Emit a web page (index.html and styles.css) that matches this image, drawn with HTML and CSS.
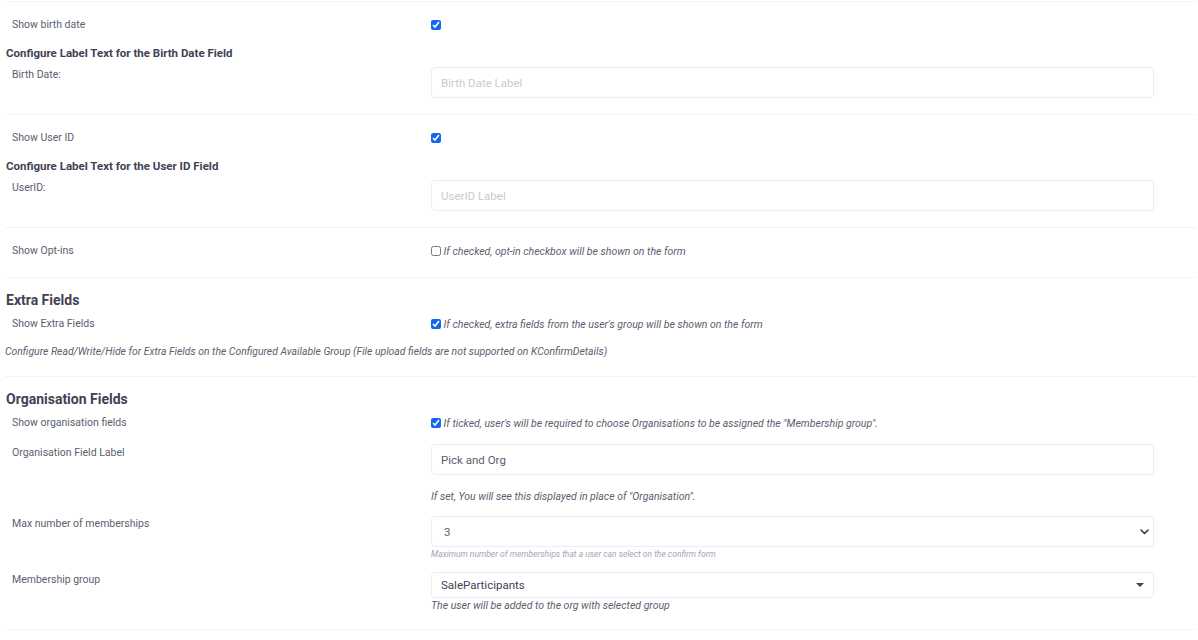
FILE: index.html
```html
<!DOCTYPE html>
<html lang="en">

<head>
    <meta charset="UTF-8">
    <meta name="viewport" content="width=device-width, initial-scale=1.0">
    <title>Confirm Details Settings</title>
    <link rel="stylesheet" href="styles.css">
</head>

<body>
    <div class="settings">
        <!-- Birth date -->
        <div class="group">
            <div class="row check-row">
                <div class="label">Show birth date</div>
                <div class="control"><input type="checkbox" checked></div>
            </div>
            <h4 class="sub-title">Configure Label Text for the Birth Date Field</h4>
            <div class="row input-row">
                <div class="label">Birth Date:</div>
                <div class="control"><input class="text-input" type="text" placeholder="Birth Date Label"></div>
            </div>
        </div>

        <!-- User ID -->
        <div class="group">
            <div class="row check-row">
                <div class="label">Show User ID</div>
                <div class="control"><input type="checkbox" checked></div>
            </div>
            <h4 class="sub-title">Configure Label Text for the User ID Field</h4>
            <div class="row input-row">
                <div class="label">UserID:</div>
                <div class="control"><input class="text-input" type="text" placeholder="UserID Label"></div>
            </div>
        </div>

        <!-- Opt-ins -->
        <div class="group">
            <div class="row check-row">
                <div class="label">Show Opt-ins</div>
                <div class="control">
                    <label class="check-label"><input type="checkbox"> If checked, opt-in checkbox will be shown on the form</label>
                </div>
            </div>
        </div>

        <!-- Extra fields -->
        <div class="group">
            <h3 class="section-title">Extra Fields</h3>
            <div class="row check-row">
                <div class="label">Show Extra Fields</div>
                <div class="control">
                    <label class="check-label"><input type="checkbox" checked> If checked, extra fields from the user's group will be shown on the form</label>
                </div>
            </div>
            <p class="note">Configure Read/Write/Hide for Extra Fields on the Configured Available Group (File upload fields are not supported on KConfirmDetails)</p>
        </div>

        <!-- Organisation fields -->
        <div class="group last">
            <h3 class="section-title">Organisation Fields</h3>
            <div class="row check-row">
                <div class="label">Show organisation fields</div>
                <div class="control">
                    <label class="check-label"><input type="checkbox" checked> If ticked, user's will be required to choose Organisations to be assigned the "Membership group".</label>
                </div>
            </div>
            <div class="row input-row org-label-row">
                <div class="label">Organisation Field Label</div>
                <div class="control">
                    <input class="text-input tall" type="text" value="Pick and Org">
                    <p class="hint">If set, You will see this displayed in place of "Organisation".</p>
                </div>
            </div>
            <div class="row input-row max-row">
                <div class="label">Max number of memberships</div>
                <div class="control">
                    <div class="fake-select">
                        <span>3</span>
                        <svg class="chevron" width="9" height="6" viewBox="0 0 9 6"><path d="M1 1l3.5 3.5L8 1" fill="none" stroke="#343a40" stroke-width="1.6" stroke-linecap="round" stroke-linejoin="round"/></svg>
                    </div>
                    <p class="small-hint">Maximum number of memberships that a user can select on the confirm form</p>
                </div>
            </div>
            <div class="row input-row group-row">
                <div class="label">Membership group</div>
                <div class="control">
                    <div class="fake-select short">
                        <span class="dark">SaleParticipants</span>
                        <svg class="caret" width="8" height="4" viewBox="0 0 8 4"><path d="M0 0h8L4 4z" fill="#444"/></svg>
                    </div>
                    <p class="hint tight">The user will be added to the org with selected group</p>
                </div>
            </div>
        </div>
    </div>
</body>

</html>
```

FILE: styles.css
```css
/* Settings form */
body {
    font-family: Roboto, "Noto Sans", Arial, sans-serif;
    margin: 0;
    padding: 0;
    background-color: #fff;
    color: #5b5e6e;
}

.settings {
    padding: 0 1px 0 5px;
}

.group {
    border-top: 1px solid #f3f3f6;
    padding: 13px 0 16px;
}

.group:first-child {
    margin-top: 1px;
}

.group.last {
    border-bottom: 1px solid #f3f3f6;
    padding-bottom: 16px;
}

.row {
    display: flex;
    align-items: flex-start;
}

.label {
    width: 419px;
    padding-top: 2px;
    padding-left: 7px;
    font-size: 10.5px;
    line-height: 16px;
    color: #5b5e6e;
    flex-shrink: 0;
}

.control {
    width: 723px;
}

.check-row {
    min-height: 20px;
}

.check-row .control {
    padding-top: 1px;
    line-height: 16px;
}

input[type="checkbox"] {
    width: 10px;
    height: 10px;
    margin: 0;
    vertical-align: -1px;
    accent-color: #1266f1;
}

.check-label {
    font-size: 10.5px;
    font-style: italic;
    color: #5b5e6e;
}

.sub-title {
    margin: 10px 0 0 1px;
    font-size: 11.5px;
    line-height: 16px;
    font-weight: bold;
    color: #3f4254;
}

.section-title {
    margin: 0 0 5px 1px;
    font-size: 14px;
    line-height: 18px;
    font-weight: bold;
    color: #3f4254;
}

.input-row {
    margin-top: 4px;
}

.input-row .control {
    padding-top: 2px;
}

.text-input {
    box-sizing: border-box;
    width: 723px;
    height: 31px;
    margin: 0;
    padding: 0 9px;
    border: 1px solid #ebedf3;
    border-radius: 4px;
    font-family: Roboto, "Noto Sans", Arial, sans-serif;
    font-size: 11.5px;
    color: #5b5e6e;
    outline: none;
}

.text-input::placeholder {
    color: #c9cad3;
}

.note {
    margin: 10px 0 0;
    font-size: 10.4px;
    line-height: 16px;
    font-style: italic;
    color: #5b5e6e;
}

.org-label-row {
    margin-top: 10px;
}

.org-label-row .control {
    padding-top: 1px;
}

.hint {
    margin: 14px 0 0;
    font-size: 10.5px;
    line-height: 16px;
    font-style: italic;
    color: #5b5e6e;
}

.hint.tight {
    margin-top: 0;
    line-height: 15px;
}

.max-row {
    margin-top: 9px;
}

.fake-select {
    box-sizing: border-box;
    width: 723px;
    height: 31px;
    padding: 0 10px 0 12px;
    border: 1px solid #ebedf3;
    border-radius: 4px;
    display: flex;
    align-items: center;
    justify-content: space-between;
    font-size: 11.5px;
    color: #5b5e6e;
}

.fake-select.short {
    height: 26px;
    padding: 0 9px 0 9px;
}

.fake-select .dark {
    color: #3f4254;
}

.chevron {
    margin-right: -6px;
}

.small-hint {
    margin: 1px 0 0;
    font-size: 8.5px;
    line-height: 12px;
    font-style: italic;
    color: #a1a5b7;
}

.group-row {
    margin-top: 10px;
}
```
